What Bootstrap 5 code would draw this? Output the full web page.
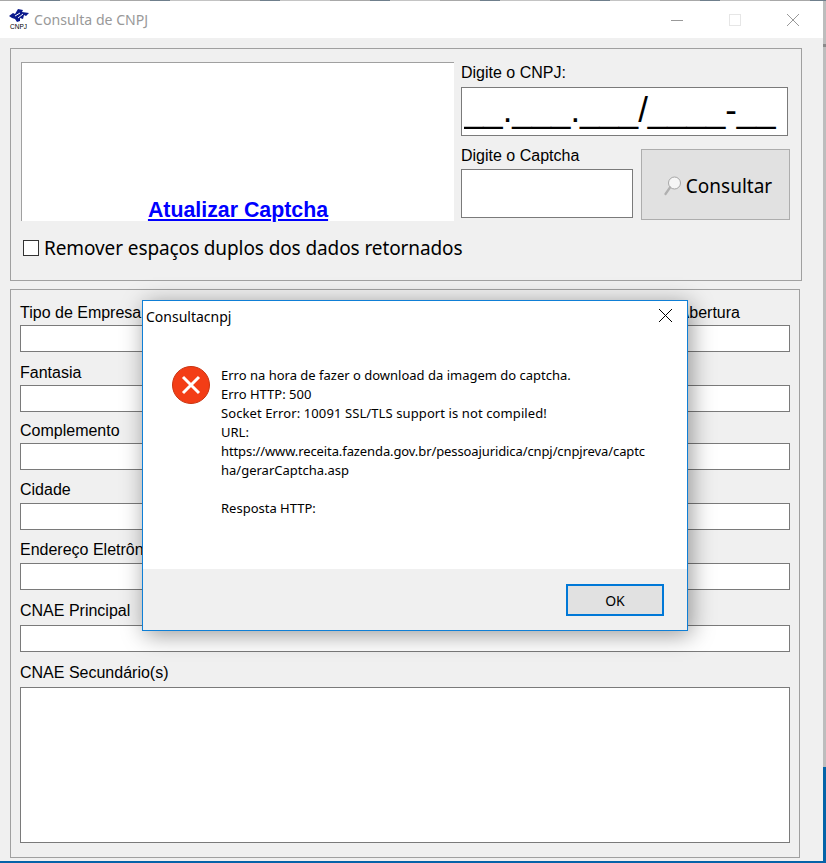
<!DOCTYPE html>
<html lang="pt-BR">

<head>
  <meta charset="UTF-8" />
  <meta name="viewport" content="width=device-width, initial-scale=1.0" />
  <title>Consulta de CNPJ</title>
  <link href="https://cdn.jsdelivr.net/npm/bootstrap@5.3.0/dist/css/bootstrap.min.css" rel="stylesheet">
  <style>
    body {
      background-color: #0563a8;
      overflow: hidden;
    }

    .desk {
      height: 863px;
      width: 826px;
      position: relative;
      background: linear-gradient(to bottom, #bdbdbd 44px, #8a8a8a 44px 47px, #bdbdbd 47px 767px, #0563a8 767px);
      font-family: "Liberation Sans", Arial, sans-serif;
      color: #000;
    }

    .topline {
      height: 1px;
      background: repeating-linear-gradient(to right, #a8a8a8 0 40px, #6f7f8c 40px 60px, #c4c4c4 60px 110px);
    }

    .shell {
      width: 823px;
      height: 860px;
      background: #f0f0f0;
      overflow: hidden;
    }

    .titlebar {
      height: 37px;
      background: #fff;
      padding-left: 9px;
    }

    .app-logo {
      margin-top: 3px;
    }

    .title-text {
      font-family: "Noto Sans", sans-serif;
      font-size: 14.1px;
      color: #999;
      margin-left: 5px;
    }

    .winbtns {
      margin-left: auto;
      padding-right: 24px;
      gap: 46px;
    }

    .logo-txt {
      font-family: "Liberation Sans", sans-serif;
      font-size: 6.5px;
      fill: #000;
    }

    .box {
      border: 1px solid #a0a0a0;
    }

    .box-top {
      margin: 10px 0 0 10px;
      width: 792px;
      height: 233px;
      padding: 13px 11px 0 10px;
    }

    .box-data {
      margin: 8px 0 0 10px;
      width: 790px;
      height: 569px;
      padding: 14px 9px 0 9px;
    }

    .captcha-pane {
      width: 433px;
      height: 159px;
      background: #fff;
      border-top: 1px solid #a0a0a0;
      border-left: 1px solid #a0a0a0;
    }

    .captcha-link {
      font-size: 21.33px;
      font-weight: bold;
      color: #00f;
      line-height: 21px;
      font-family: "Liberation Sans", sans-serif;
    }

    .side-pane {
      margin-left: 7px;
      width: 329px;
      padding-top: 2px;
    }

    .lbl {
      font-size: 16px;
      line-height: 18px;
      display: block;
      color: #000;
      margin-bottom: 3px;
    }

    .lbl-b {
      margin-bottom: 4px;
    }

    .lbl-c {
      margin-bottom: 5px;
    }

    .form-control.fld {
      border: 1px solid #7a7a7a;
      border-radius: 0;
      background: #fff;
      height: 27px;
      padding: 0 3px;
      box-shadow: none;
    }

    .form-control.mask {
      height: 49px;
      width: 327px;
      font-family: "Liberation Sans", sans-serif;
      font-size: 34.8px;
      line-height: 40px;
      color: #000;
      padding: 0 2px 4px;
    }

    .form-control.cap-input {
      width: 172px;
      height: 49px;
    }

    .action-row {
      margin-top: 11px;
    }

    .btn.btn-query {
      width: 149px;
      height: 71px;
      margin: 2px 0 0 8px;
      background: #e1e1e1;
      border: 1px solid #adadad;
      border-radius: 0;
      color: #000;
      font-family: "Noto Sans", sans-serif;
      font-size: 19px;
      padding: 3px 0 0 5px;
    }

    .check-row {
      margin-top: 14px;
      font-family: "Noto Sans", sans-serif;
      font-size: 19px;
      letter-spacing: -0.1px;
      line-height: 26px;
      margin-left: 2px;
    }

    .tick {
      width: 16px;
      height: 16px;
      border: 1px solid #333;
      background: #fff;
      margin-right: 5px;
    }

    .abert-col {
      width: 171px;
    }

    .gap-m {
      margin-top: 12px;
    }

    .gap-s {
      margin-top: 10px;
    }

    .gap-t {
      margin-top: 11px;
    }

    .form-control.notes {
      height: 156px;
      resize: none;
    }

    .msgbox {
      position: absolute;
      left: 142px;
      top: 300px;
      width: 546px;
      height: 331px;
      background: #fff;
      border: 1px solid #0f7fd6;
      box-shadow: 3px 4px 22px rgba(0, 0, 0, 0.4);
      font-family: "Noto Sans", sans-serif;
      color: #000;
    }

    .msg-title {
      font-size: 14px;
      padding: 5px 0 0 3px;
      height: 33px;
    }

    .msg-close {
      margin-right: 15px;
      margin-top: 3px;
    }

    .msg-body {
      height: 235px;
      padding: 32px 30px 0 29px;
      font-size: 13px;
      line-height: 19px;
    }

    .msg-text {
      margin-left: 11px;
    }

    .url-line {
      letter-spacing: -0.1px;
    }

    .sock-line {
      letter-spacing: 0.1px;
    }

    .msg-foot {
      height: 61px;
      background: #f0f0f0;
      padding: 15px 23px 0 0;
    }

    .btn.btn-okay {
      width: 98px;
      height: 32px;
      background: #e1e1e1;
      border: 2px solid #0078d7;
      border-radius: 0;
      font-size: 14px;
      color: #000;
      padding: 0;
    }
  </style>
</head>

<body>
  <div class="desk">
    <div class="topline"></div>
    <div class="shell">
      <div class="titlebar d-flex align-items-center">
        <svg class="app-logo" width="20" height="24" viewBox="0 0 20 24">
          <path d="M0 7L4 4L6 5L9 0L14 1L13 3L20 4L17 7L15 6L14 10L11 9L11 12L8 13L6 10L3 9Z" fill="#0b1a8c" />
          <path d="M6 7L11 4M9 9L14 5" stroke="#fff" stroke-width="1" />
          <text class="logo-txt" x="1" y="20">CNPJ</text>
        </svg>
        <span class="title-text">Consulta de CNPJ</span>
        <div class="winbtns d-flex align-items-center">
          <svg width="12" height="12" viewBox="0 0 12 12"><path d="M0 6.5H12" stroke="#999" /></svg>
          <svg width="12" height="12" viewBox="0 0 12 12"><rect x=".5" y=".5" width="11" height="11" fill="none" stroke="#e6e6e6" /></svg>
          <svg width="12" height="12" viewBox="0 0 12 12"><path d="M0 0L12 12M12 0L0 12" stroke="#999" /></svg>
        </div>
      </div>

      <div class="box box-top">
        <div class="d-flex">
          <div class="captcha-pane d-flex align-items-end justify-content-center">
            <a href="#" class="captcha-link">Atualizar Captcha</a>
          </div>
          <div class="side-pane">
            <label class="lbl lbl-c">Digite o CNPJ:</label>
            <input class="form-control fld mask" value="__.___.___/____-__">
            <div class="action-row d-flex">
              <div>
                <label class="lbl lbl-b">Digite o Captcha</label>
                <input class="form-control fld cap-input">
              </div>
              <button class="btn btn-query d-flex align-items-center justify-content-center gap-1" type="button">
                <svg width="18" height="20" viewBox="0 0 18 20">
                  <circle cx="10.5" cy="7" r="6" fill="#f6f6f6" stroke="#a6a6a6" />
                  <path d="M6 11.5L1.5 18" stroke="#b0b0b0" stroke-width="2.2" stroke-linecap="round" />
                </svg>
                Consultar
              </button>
            </div>
          </div>
        </div>
        <div class="check-row d-flex align-items-center">
          <span class="tick"></span>
          <span>Remover espaços duplos dos dados retornados</span>
        </div>
      </div>

      <div class="box box-data">
        <div class="d-flex gap-2">
          <div class="flex-grow-1">
            <label class="lbl">Tipo de Empresa</label>
            <input class="form-control fld">
          </div>
          <div class="abert-col">
            <label class="lbl">Data de Abertura</label>
            <input class="form-control fld">
          </div>
        </div>
        <div class="gap-m">
          <label class="lbl">Fantasia</label>
          <input class="form-control fld">
        </div>
        <div class="gap-s">
          <label class="lbl">Complemento</label>
          <input class="form-control fld">
        </div>
        <div class="gap-t">
          <label class="lbl lbl-b">Cidade</label>
          <input class="form-control fld">
        </div>
        <div class="gap-t">
          <label class="lbl lbl-b">Endereço Eletrônico</label>
          <input class="form-control fld">
        </div>
        <div class="gap-m">
          <label class="lbl lbl-c">CNAE Principal</label>
          <input class="form-control fld">
        </div>
        <div class="gap-m">
          <label class="lbl lbl-c">CNAE Secundário(s)</label>
          <textarea class="form-control fld notes"></textarea>
        </div>
      </div>
    </div>

    <div class="msgbox">
      <div class="msg-title d-flex justify-content-between">
        <span>Consultacnpj</span>
        <svg class="msg-close" width="13" height="13" viewBox="0 0 13 13"><path d="M0 0L13 13M13 0L0 13" stroke="#000" /></svg>
      </div>
      <div class="msg-body d-flex">
        <svg class="flex-shrink-0" width="38" height="38" viewBox="0 0 38 38">
          <circle cx="19" cy="19" r="18.5" fill="#f33d16" stroke="#c9330f" />
          <path d="M11 11L27 27M27 11L11 27" stroke="#fff" stroke-width="3" />
        </svg>
        <div class="msg-text">
          Erro na hora de fazer o download da imagem do captcha.<br>
          Erro HTTP: 500<br>
          <span class="sock-line">Socket Error: 10091 SSL/TLS support is not compiled!</span><br>
          URL:<br>
          <span class="url-line">https://www.receita.fazenda.gov.br/pessoajuridica/cnpj/cnpjreva/captc</span><br>
          ha/gerarCaptcha.asp<br>
          <br>
          Resposta HTTP:
        </div>
      </div>
      <div class="msg-foot d-flex justify-content-end">
        <button class="btn btn-okay" type="button">OK</button>
      </div>
    </div>
  </div>

  <script src="https://cdn.jsdelivr.net/npm/bootstrap@5.3.0/dist/js/bootstrap.bundle.min.js"></script>
</body>

</html>
